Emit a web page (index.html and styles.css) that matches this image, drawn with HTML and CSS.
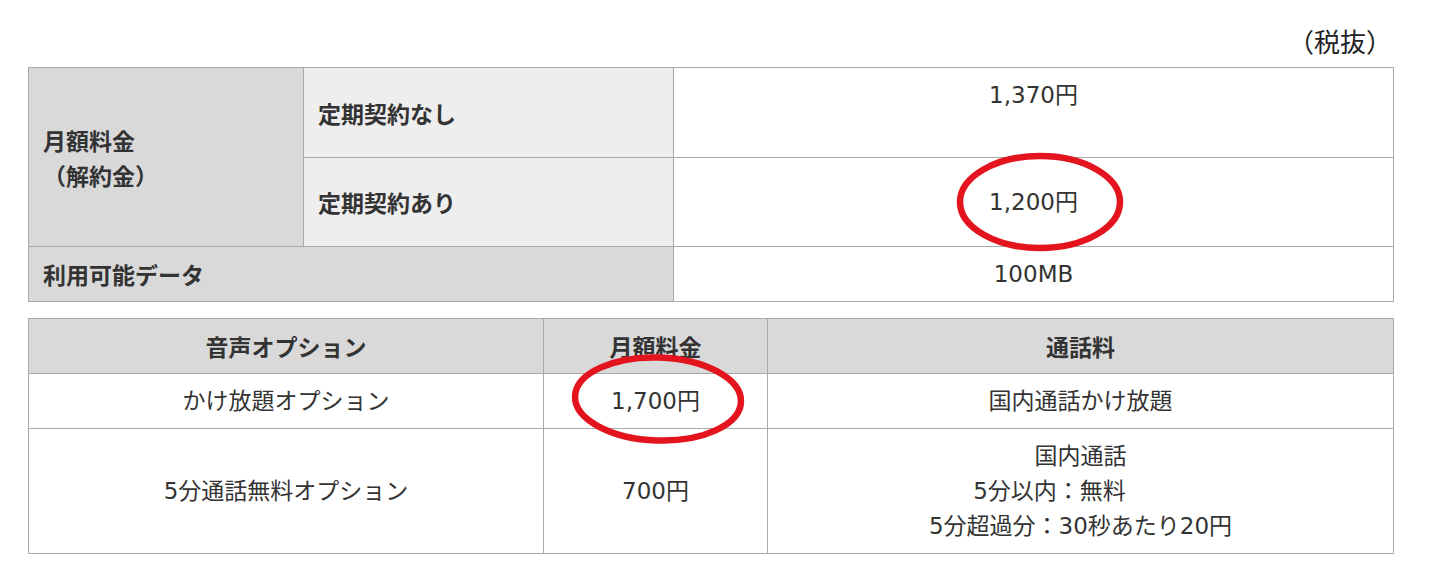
FILE: index.html
```html
<!DOCTYPE html>
<html lang="ja">
<head>
<meta charset="utf-8">
<title>料金表</title>
<link rel="stylesheet" href="styles.css">
</head>
<body>
<div class="page">
  <p class="note">（税抜）</p>
  <table class="price price-main">
    <colgroup><col class="c1"><col class="c2"><col class="c3"></colgroup>
    <tbody>
      <tr class="tall">
        <th class="head" rowspan="2">月額料金<br>（解約金）</th>
        <th class="sub">定期契約なし</th>
        <td class="val">1,370円<br>&nbsp;</td>
      </tr>
      <tr class="tall">
        <th class="sub">定期契約あり</th>
        <td class="val">1,200円</td>
      </tr>
      <tr>
        <th class="head" colspan="2">利用可能データ</th>
        <td class="val">100MB</td>
      </tr>
    </tbody>
  </table>

  <table class="price price-opt">
    <colgroup><col class="o1"><col class="o2"><col class="o3"></colgroup>
    <thead>
      <tr>
        <th class="colhead">音声オプション</th>
        <th class="colhead">月額料金</th>
        <th class="colhead">通話料</th>
      </tr>
    </thead>
    <tbody>
      <tr>
        <td class="val">かけ放題オプション</td>
        <td class="val">1,700円</td>
        <td class="val">国内通話かけ放題</td>
      </tr>
      <tr>
        <td class="val">5分通話無料オプション</td>
        <td class="val">700円</td>
        <td class="val">国内通話<br><span class="shift">5分以内：無料</span><br>5分超過分：30秒あたり20円</td>
      </tr>
    </tbody>
  </table>

  <svg class="marks" width="1430" height="585" viewBox="0 0 1430 585" aria-hidden="true">
    <ellipse cx="1040" cy="202" rx="80" ry="46" fill="none" stroke="#e3141e" stroke-width="6.5"/>
    <ellipse cx="658" cy="399" rx="83" ry="41.5" fill="none" stroke="#e3141e" stroke-width="6.5" transform="rotate(2 658 399)"/>
  </svg>
</div>
</body>
</html>
```

FILE: styles.css
```css
html, body {
  margin: 0;
  padding: 0;
  background: #ffffff;
}

.page {
  position: relative;
  width: 1364px;
  padding: 23px 0 0 28px;
  font-family: "DejaVu Sans", "Noto Sans CJK JP", sans-serif;
  font-size: 23px;
  line-height: 35px;
  color: #333333;
}

.note {
  margin: 0 0 9px 0;
  text-align: right;
  font-family: "Noto Sans CJK JP", sans-serif;
  font-size: 26px;
  color: #222222;
}

.price {
  width: 1365px;
  border-collapse: collapse;
  table-layout: fixed;
}

.price th,
.price td {
  border: 1px solid #aaaaaa;
  padding: 10px 14px 9px 14px;
  vertical-align: middle;
}

.price-main {
  margin-bottom: 16px;
}

.c1 { width: 275px; }
.c2 { width: 370px; }
.c3 { width: 720px; }

.o1 { width: 515px; }
.o2 { width: 224px; }
.o3 { width: 626px; }

.tall {
  height: 89px;
}

.head {
  background: #d9d9d9;
  font-weight: bold;
  text-align: left;
  font-family: "Noto Sans CJK JP", sans-serif;
}

.sub {
  background: #eeeeee;
  font-weight: bold;
  text-align: left;
  padding-left: 15px;
  font-family: "Noto Sans CJK JP", sans-serif;
}

.val {
  text-align: center;
  font-weight: normal;
}

.colhead {
  background: #d9d9d9;
  font-weight: bold;
  text-align: center;
  font-family: "Noto Sans CJK JP", sans-serif;
}

.shift {
  padding-right: 62px;
}

.marks {
  position: absolute;
  left: 0;
  top: 0;
  pointer-events: none;
}
```
